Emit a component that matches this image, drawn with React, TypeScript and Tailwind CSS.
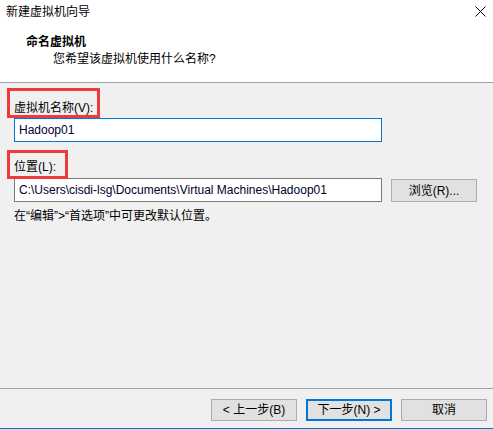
import React from "react";

const font = { fontFamily: '"Liberation Sans", "Noto Sans CJK SC", sans-serif' };

function Btn({ children, primary }: { children: React.ReactNode; primary?: boolean }) {
  return (
    <div
      className={
        "w-[86px] h-[22px] flex items-center justify-center bg-[#e1e1e1] text-[12px] text-black box-border " +
        (primary ? "border-2 border-[#0078d7]" : "border border-[#adadad]")
      }
    >
      {children}
    </div>
  );
}

export default function App() {
  return (
    <div
      className="w-[493px] h-[429px] flex flex-col bg-[#f0f0f0] text-black overflow-hidden"
      style={font}
    >
      {/* header */}
      <div className="h-[82px] bg-white relative shrink-0">
        <div className="absolute left-[6px] top-[3px] text-[12px] leading-[18px]">新建虚拟机向导</div>
        <svg className="absolute left-[475px] top-[6px]" width="11" height="11" viewBox="0 0 11 11">
          <path d="M0.5 0.5 L10.5 10.5 M10.5 0.5 L0.5 10.5" stroke="#000" strokeWidth="1" fill="none" />
        </svg>
        <div className="absolute left-[26px] top-[33px] text-[12px] leading-[18px] font-bold">命名虚拟机</div>
        <div className="absolute left-[53px] top-[50px] text-[12px] leading-[18px]">您希望该虚拟机使用什么名称?</div>
      </div>
      <div className="h-px bg-[#a0a0a0] shrink-0" />

      {/* content */}
      <div className="flex-1 flex flex-col pl-[14px] pt-[15px]">
        <div className="relative h-[20px] text-[12px] leading-[20px]">
          虚拟机名称(V):
          <div className="absolute left-[-7px] top-[-10px] w-[93px] h-[30px] border-[3px] border-[#ee3a3a]" />
        </div>
        <div className="w-[368px] h-[24px] border border-[#0078d7] bg-white flex items-center pl-[4px] text-[12px] text-[#000030]">
          Hadoop01
        </div>

        <div className="relative h-[20px] mt-[15px] text-[12px] leading-[20px]">
          位置(L):
          <div className="absolute left-[-7px] top-[-7px] w-[61px] h-[29px] border-[3px] border-[#ee3a3a]" />
        </div>
        <div className="flex items-start gap-[9px] mt-[1px]">
          <div className="w-[368px] h-[24px] border border-[#7a7a7a] bg-white flex items-center pl-[4px] text-[12px] text-[#000030] whitespace-nowrap overflow-hidden">
            C:\Users\cisdi-lsg\Documents\Virtual Machines\Hadoop01
          </div>
          <div className="mt-[1px] w-[86px] h-[23px] border border-[#adadad] bg-[#e1e1e1] flex items-center justify-center text-[12px]">
            浏览(R)...
          </div>
        </div>
        <div className="mt-[4px] h-[20px] text-[12px] leading-[20px]">
          在“编辑”&gt;“首选项”中可更改默认位置。
        </div>
      </div>

      {/* footer */}
      <div className="h-px bg-[#a0a0a0] shrink-0" />
      <div className="h-[39px] shrink-0 flex justify-end items-start pt-[10px] pr-[6px] gap-[9px]">
        <Btn>&lt; 上一步(B)</Btn>
        <Btn primary>下一步(N) &gt;</Btn>
        <Btn>取消</Btn>
      </div>
      <div className="h-px bg-[#0078d7] shrink-0" />
    </div>
  );
}
